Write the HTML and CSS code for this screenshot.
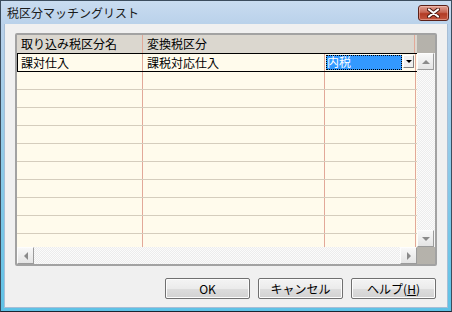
FILE: index.html
```html
<!DOCTYPE html>
<html>
  <head>
    <meta charset="utf-8">
    <title>税区分マッチングリスト</title>
    <link rel="stylesheet" href="styles.css">
  </head>
  <body>
    <div id="window">
      <div class="titlebar">
        <span class="title">税区分マッチングリスト</span>
        <button class="close-btn">
          <svg width="13" height="10" viewBox="0 0 13 10">
            <path d="M2 1.5 L11 8.5 M11 1.5 L2 8.5" stroke="#4a1810" stroke-width="4" stroke-linecap="round"/>
            <path d="M2 1.5 L11 8.5 M11 1.5 L2 8.5" stroke="#fff" stroke-width="2.2" stroke-linecap="round"/>
          </svg>
        </button>
      </div>
      <div class="client">
        <div class="grid">
          <div class="grid-main">
            <div class="grid-head">
              <div class="hcell">取り込み税区分名</div>
              <div class="hcell wide">変換税区分</div>
              <div class="hcell"></div>
            </div>
            <div class="row current">
              <div class="cell">課対仕入</div>
              <div class="cell">課税対応仕入</div>
              <div class="cell combo">
                <span class="combo-text">内税</span>
                <span class="combo-btn"><i class="tri-down small"></i></span>
              </div>
              <div class="cell last"></div>
            </div>
            <div class="row"><div class="cell"></div><div class="cell"></div><div class="cell"></div><div class="cell last"></div></div>
            <div class="row"><div class="cell"></div><div class="cell"></div><div class="cell"></div><div class="cell last"></div></div>
            <div class="row"><div class="cell"></div><div class="cell"></div><div class="cell"></div><div class="cell last"></div></div>
            <div class="row"><div class="cell"></div><div class="cell"></div><div class="cell"></div><div class="cell last"></div></div>
            <div class="row"><div class="cell"></div><div class="cell"></div><div class="cell"></div><div class="cell last"></div></div>
            <div class="row"><div class="cell"></div><div class="cell"></div><div class="cell"></div><div class="cell last"></div></div>
            <div class="row"><div class="cell"></div><div class="cell"></div><div class="cell"></div><div class="cell last"></div></div>
            <div class="row"><div class="cell"></div><div class="cell"></div><div class="cell"></div><div class="cell last"></div></div>
            <div class="row"><div class="cell"></div><div class="cell"></div><div class="cell"></div><div class="cell last"></div></div>
            <div class="row"><div class="cell"></div><div class="cell"></div><div class="cell"></div><div class="cell last"></div></div>
            <div class="row"><div class="cell"></div><div class="cell"></div><div class="cell"></div><div class="cell last"></div></div>
          </div>
          <div class="vscroll">
            <div class="vs-head"></div>
            <div class="sb-btn"><i class="tri-up"></i></div>
            <div class="sb-track"></div>
            <div class="sb-btn"><i class="tri-down"></i></div>
          </div>
          <div class="hscroll">
            <div class="sb-btn"><i class="tri-left"></i></div>
            <div class="sb-track"></div>
            <div class="sb-btn"><i class="tri-right"></i></div>
          </div>
          <div class="corner"></div>
        </div>
        <div class="buttons">
          <button class="btn">OK</button>
          <button class="btn">キャンセル</button>
          <button class="btn">ヘルプ(<u>H</u>)</button>
        </div>
      </div>
    </div>
  </body>
</html>
```

FILE: styles.css
```css
body {
  margin: 0;
  background: #ffffff;
  font-family: "Noto Sans CJK JP", sans-serif;
  font-size: 12px;
  color: #000;
}
#window {
  width: 452px;
  height: 312px;
  box-sizing: border-box;
  border: 1px solid #3c4d5e;
  border-bottom-color: #1b2530;
  background: linear-gradient(#c9dcf0, #b9d1ea 24px, #5fc2e6 308px);
  padding: 0 3px 3px 3px;
  display: flex;
  flex-direction: column;
}
.titlebar {
  height: 23px;
  display: flex;
  align-items: flex-start;
  justify-content: space-between;
}
.title {
  padding: 4px 0 0 3px;
  line-height: 15px;
  font-size: 12px;
  color: #1a1a1a;
}
.close-btn {
  width: 31px;
  height: 16px;
  margin: 4px -1px 0 0;
  padding: 0;
  border: 1px solid #5b2018;
  border-radius: 3px;
  background: linear-gradient(#e0a195, #c76552 45%, #b23b24 55%, #c4563f);
  box-shadow: inset 0 0 0 1px rgba(255, 210, 200, 0.45);
  display: flex;
  align-items: center;
  justify-content: center;
}
.client {
  flex: 1;
  background: #f0f0f0;
  border: 1px solid #a7bed6;
  border-top: none;
  padding: 9px 10px 0 10px;
  display: flex;
  flex-direction: column;
}
.grid {
  width: 422px;
  height: 233px;
  box-sizing: border-box;
  border: 2px solid #a2a2a2;
  border-radius: 2px;
  display: grid;
  grid-template-columns: 400px 18px;
  grid-template-rows: 212px 17px;
}
.grid-main {
  background: #fffbec;
  overflow: hidden;
}
.grid-head {
  height: 18px;
  display: grid;
  grid-template-columns: 126px 272px 2px;
  background: #dbd7cf;
}
.hcell {
  padding-left: 4px;
  line-height: 18px;
  border-right: 1px solid #e2a898;
}
.hcell:last-child {
  border-right: none;
  padding: 0;
}
.row {
  height: 18px;
  box-sizing: border-box;
  display: grid;
  grid-template-columns: 126px 182px 91px 1px;
  border-bottom: 1px solid #d5cdbd;
}
.row.current {
  height: 19px;
  border-top: 1px solid #000;
  border-bottom: 1px solid #000;
  box-shadow: inset 1px 0 0 #000;
}
.cell {
  padding-left: 4px;
  line-height: 17px;
  border-right: 1px solid #e2a898;
  white-space: nowrap;
}
.cell.last {
  border-right: none;
  padding: 0;
}
.cell.combo {
  padding: 1px;
  display: flex;
  gap: 1px;
}
.combo-text {
  flex: 1;
  background: #3399ff;
  color: #fff;
  line-height: 13px;
  padding-left: 1px;
  outline: 1px dotted #000;
  outline-offset: -1px;
}
.combo-btn {
  width: 11px;
  height: 13px;
  box-sizing: border-box;
  background: #f0f0f0;
  border: 1px solid;
  border-color: #fff #808080 #808080 #fff;
  display: flex;
  align-items: center;
  justify-content: center;
}
.vscroll {
  display: flex;
  flex-direction: column;
  background: #f5f5f5;
}
.vs-head {
  height: 18px;
  background: #b5b2ab;
}
.sb-btn {
  width: 17px;
  height: 17px;
  box-sizing: border-box;
  flex: none;
  background: linear-gradient(#f8f8f8, #e4e4e4);
  border: 1px solid;
  border-color: #fdfdfd #9b9b9b #9b9b9b #fdfdfd;
  display: flex;
  align-items: center;
  justify-content: center;
}
.sb-track {
  flex: 1;
  background-color: #f4f4f4;
  background-image: repeating-conic-gradient(#fbfbfb 0 25%, #ececec 0 50%);
  background-size: 2px 2px;
}
.hscroll {
  display: flex;
  background: #f5f5f5;
}
.corner {
  background: #b5b2ab;
}
.tri-up, .tri-down, .tri-left, .tri-right {
  width: 0;
  height: 0;
  border: 4px solid transparent;
}
.tri-up {
  border-bottom-color: #8a8a8a;
  border-top-width: 0;
}
.tri-down {
  border-top-color: #8a8a8a;
  border-bottom-width: 0;
}
.tri-down.small {
  border-width: 3px 3px 0 3px;
  border-top-color: #000;
}
.tri-left {
  border-right-color: #8a8a8a;
  border-left-width: 0;
}
.tri-right {
  border-left-color: #8a8a8a;
  border-right-width: 0;
}
.buttons {
  display: flex;
  justify-content: flex-end;
  gap: 8px;
  margin-top: 12px;
  padding-right: 1px;
}
.btn {
  width: 85px;
  height: 21px;
  padding: 0;
  font-family: "Noto Sans CJK JP", sans-serif;
  font-size: 12px;
  color: #000;
  border: 1px solid #707070;
  border-radius: 2px;
  background: linear-gradient(#f4f4f4, #ebebeb 50%, #dddddd 51%, #d2d2d2);
  box-shadow: inset 0 0 0 1px #fcfcfc;
}
```
